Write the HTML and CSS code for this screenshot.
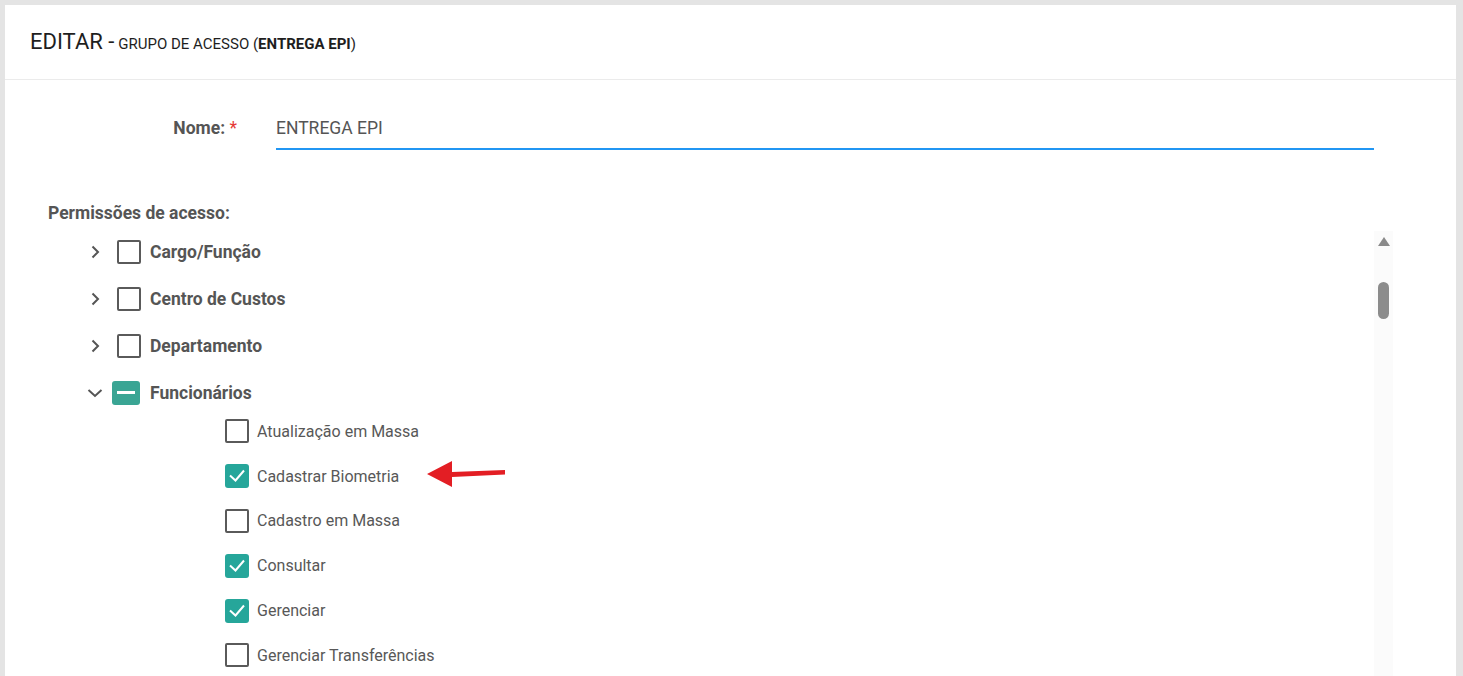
FILE: index.html
```html
<!DOCTYPE html>
<html lang="pt-BR">
<head>
    <meta charset="UTF-8">
    <meta name="viewport" content="width=device-width, initial-scale=1.0">
    <title>Editar - Grupo de Acesso</title>
    <link rel="stylesheet" href="styles.css">
</head>
<body>

    <div class="card">
        <header class="card-header">
            <span class="title">EDITAR -</span>
            <span class="subtitle">GRUPO DE ACESSO (<b>ENTREGA EPI</b>)</span>
        </header>

        <div class="card-body">
            <div class="form-row">
                <label class="form-label" for="nome">Nome: <span class="required">*</span></label>
                <div class="form-input">
                    <input type="text" id="nome" value="ENTREGA EPI">
                </div>
            </div>

            <div class="section-label">Permissões de acesso:</div>

            <div class="tree">
                <ul class="tree-list">
                    <li class="node">
                        <div class="node-row">
                            <span class="chevron"><svg viewBox="0 0 16 16" width="16" height="16"><path d="M5.5 2.5 L11 8 L5.5 13.5" fill="none" stroke="#555" stroke-width="2"/></svg></span>
                            <span class="cb"></span>
                            <span class="node-label">Cargo/Função</span>
                        </div>
                    </li>
                    <li class="node">
                        <div class="node-row">
                            <span class="chevron"><svg viewBox="0 0 16 16" width="16" height="16"><path d="M5.5 2.5 L11 8 L5.5 13.5" fill="none" stroke="#555" stroke-width="2"/></svg></span>
                            <span class="cb"></span>
                            <span class="node-label">Centro de Custos</span>
                        </div>
                    </li>
                    <li class="node">
                        <div class="node-row">
                            <span class="chevron"><svg viewBox="0 0 16 16" width="16" height="16"><path d="M5.5 2.5 L11 8 L5.5 13.5" fill="none" stroke="#555" stroke-width="2"/></svg></span>
                            <span class="cb"></span>
                            <span class="node-label">Departamento</span>
                        </div>
                    </li>
                    <li class="node open">
                        <div class="node-row">
                            <span class="chevron"><svg viewBox="0 0 16 16" width="16" height="16"><path d="M1.5 5 L8 11 L14.5 5" fill="none" stroke="#555" stroke-width="2"/></svg></span>
                            <span class="cb mixed"><i></i></span>
                            <span class="node-label">Funcionários</span>
                        </div>
                        <ul class="children">
                            <li class="leaf"><span class="cb"></span><span class="leaf-label">Atualização em Massa</span></li>
                            <li class="leaf"><span class="cb checked"><svg viewBox="0 0 24 24" width="24" height="24"><path d="M5 11.5 L10.5 16.5 L19 6.5" fill="none" stroke="#fff" stroke-width="2"/></svg></span><span class="leaf-label">Cadastrar Biometria</span></li>
                            <li class="leaf"><span class="cb"></span><span class="leaf-label">Cadastro em Massa</span></li>
                            <li class="leaf"><span class="cb checked"><svg viewBox="0 0 24 24" width="24" height="24"><path d="M5 11.5 L10.5 16.5 L19 6.5" fill="none" stroke="#fff" stroke-width="2"/></svg></span><span class="leaf-label">Consultar</span></li>
                            <li class="leaf"><span class="cb checked"><svg viewBox="0 0 24 24" width="24" height="24"><path d="M5 11.5 L10.5 16.5 L19 6.5" fill="none" stroke="#fff" stroke-width="2"/></svg></span><span class="leaf-label">Gerenciar</span></li>
                            <li class="leaf"><span class="cb"></span><span class="leaf-label">Gerenciar Transferências</span></li>
                        </ul>
                    </li>
                </ul>

                <div class="scroll-track">
                    <span class="scroll-up"></span>
                    <span class="scroll-thumb"></span>
                </div>
            </div>
        </div>

        <!-- annotation arrow -->
        <svg class="pointer" viewBox="0 0 80 28" width="80" height="28"><polygon points="0,14 25,1 25,12 78,10 78,14.5 25,17 25,27" fill="#e31e24"/></svg>
    </div>

</body>
</html>
```

FILE: styles.css
```css
/* General */
body {
    font-family: Roboto, 'Noto Sans', sans-serif;
    margin: 5px 7px 0 5px;
    padding: 0;
    background: #e4e4e4;
    color: #555;
    height: 671px;
    overflow: hidden;
}

ul {
    list-style: none;
    margin: 0;
    padding: 0;
}

/* Card */
.card {
    position: relative;
    background: #fff;
    box-shadow: 0 0 5px rgba(0, 0, 0, 0.12);
    min-height: 690px;
}

.card-header {
    height: 75px;
    box-sizing: border-box;
    padding: 24px 25px 0;
    border-bottom: 1px solid #ebebeb;
    color: #1e1e1e;
}

.title {
    font-size: 22px;
}

.subtitle {
    font-size: 15px;
}

.subtitle b {
    font-weight: 700;
}

.card-body {
    padding: 35px 0 0;
}

/* Name field */
.form-row {
    display: flex;
    align-items: flex-start;
    padding-right: 82px;
}

.form-label {
    width: 232px;
    flex: none;
    text-align: right;
    font-size: 17.5px;
    font-weight: 700;
    line-height: 26px;
}

.required {
    color: #e53935;
    font-weight: 400;
}

.form-input {
    flex: 1;
    margin-left: 39px;
}

.form-input input {
    display: block;
    width: 100%;
    box-sizing: border-box;
    border: none;
    border-bottom: 2px solid #2196f3;
    outline: none;
    font-family: inherit;
    font-size: 17.5px;
    color: #555;
    line-height: 26px;
    height: 35px;
    padding: 0 0 7px;
}

.section-label {
    margin: 53px 0 0 43px;
    font-size: 17.5px;
    font-weight: 700;
    line-height: 20px;
}

/* Tree */
.tree {
    display: flex;
    margin-top: 5px;
    padding-right: 63px;
}

.tree-list {
    flex: 1;
    padding-left: 82px;
}

.node-row {
    display: flex;
    align-items: center;
    height: 47px;
}

.chevron {
    width: 16px;
    height: 16px;
    display: flex;
    margin-right: 14px;
}

.cb {
    width: 24px;
    height: 24px;
    box-sizing: border-box;
    border: 2px solid #5a5a5a;
    border-radius: 2px;
    flex: none;
    margin-right: 9px;
    display: flex;
    align-items: center;
    justify-content: center;
}

.cb.checked {
    border: none;
    background: #26a69a;
    border-radius: 3px;
}

.cb.mixed {
    width: 28px;
    margin-left: -5px;
    margin-right: 10px;
    border: none;
    border-radius: 3px;
    background: #3aa594;
}

.cb.mixed i {
    width: 18px;
    height: 3px;
    background: #fff;
}

.node-label {
    font-size: 17.5px;
    font-weight: 700;
}

.children {
    margin-top: -7px;
    padding-left: 138px;
}

.leaf {
    display: flex;
    align-items: center;
    height: 44.8px;
}

.leaf .cb {
    margin-right: 8px;
}

.leaf-label {
    font-size: 16px;
    color: #585858;
}

/* Fake scrollbar */
.scroll-track {
    width: 19px;
    flex: none;
    margin-top: 3px;
    background: #fbfbfb;
    display: flex;
    flex-direction: column;
    align-items: center;
}

.scroll-up {
    margin-top: 6px;
    width: 0;
    height: 0;
    border-left: 6.5px solid transparent;
    border-right: 6.5px solid transparent;
    border-bottom: 9px solid #8a8a8a;
}

.scroll-thumb {
    margin-top: 36px;
    width: 11px;
    height: 37px;
    border-radius: 6px;
    background: #8c8c8c;
}

/* Annotation */
.pointer {
    position: absolute;
    left: 422px;
    top: 455px;
}
```
